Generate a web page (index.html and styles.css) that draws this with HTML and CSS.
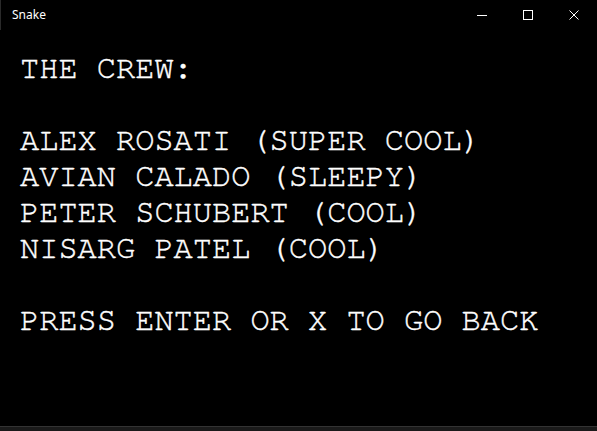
FILE: index.html
```html
<!DOCTYPE html>
<html>
<head>
<meta charset="utf-8">
<title>Snake</title>
<link rel="stylesheet" href="styles.css">
</head>
<body>
<div class="window">
  <div class="titlebar">
    <span class="title">Snake</span>
    <div class="controls">
      <span class="ctl">
        <svg width="10" height="10" viewBox="0 0 10 10"><rect x="0" y="5" width="10" height="1" fill="#fff"/></svg>
      </span>
      <span class="ctl">
        <svg width="10" height="10" viewBox="0 0 10 10"><rect x="0.5" y="0.5" width="9" height="9" fill="none" stroke="#fff" stroke-width="1"/></svg>
      </span>
      <span class="ctl">
        <svg width="10" height="10" viewBox="0 0 10 10"><path d="M0.5 0.5 L9.5 9.5 M9.5 0.5 L0.5 9.5" stroke="#fff" stroke-width="1"/></svg>
      </span>
    </div>
  </div>
  <div class="screen">
    <p class="line">THE CREW:</p>
    <p class="line blank">&nbsp;</p>
    <p class="line">ALEX ROSATI (SUPER COOL)</p>
    <p class="line">AVIAN CALADO (SLEEPY)</p>
    <p class="line">PETER SCHUBERT (COOL)</p>
    <p class="line">NISARG PATEL (COOL)</p>
    <p class="line blank">&nbsp;</p>
    <p class="line">PRESS ENTER OR X TO GO BACK</p>
  </div>
</div>
<div class="taskbar"></div>
</body>
</html>
```
FILE: styles.css
```css
html, body {
  margin: 0;
  padding: 0;
  background: #1a1a1a;
  overflow: hidden;
}
.window {
  width: 597px;
  height: 427px;
  background: #000;
  border-bottom: 1px solid #333;
  box-sizing: border-box;
  display: flex;
  flex-direction: column;
}
.titlebar {
  height: 30px;
  display: flex;
  align-items: center;
  justify-content: space-between;
  border-left: 1px solid #2a2a2a;
  box-sizing: border-box;
}
.title {
  font-family: "Noto Sans", "Open Sans", sans-serif;
  font-size: 12px;
  color: #fff;
  padding-left: 11px;
  padding-bottom: 1px;
}
.controls {
  display: flex;
  height: 30px;
}
.ctl {
  width: 46px;
  height: 30px;
  display: flex;
  align-items: center;
  justify-content: center;
}
.screen {
  padding: 20px 0 0 20px;
  flex: 1;
}
.line {
  margin: 0;
  font-family: "FreeMono", "Liberation Mono", monospace;
  font-size: 32px;
  line-height: 36px;
  color: #fff;
  white-space: pre;
  -webkit-text-stroke: 0.4px #fff;
}
```
